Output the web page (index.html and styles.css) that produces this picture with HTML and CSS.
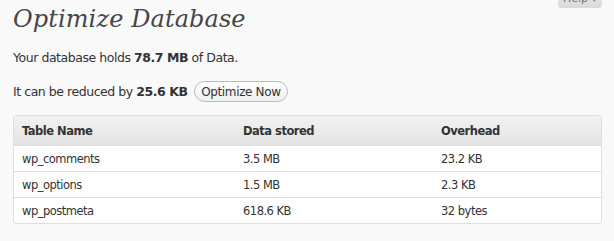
FILE: index.html
```html
<!DOCTYPE html>
<html lang="en">
<head>
    <meta charset="UTF-8">
    <title>Optimize Database</title>
    <link rel="stylesheet" href="styles.css">
</head>
<body>
    <div class="wrap">
        <div class="help-tab">Help &#9662;</div>
        <h2 class="title">Optimize Database</h2>
        <p class="line first">Your database holds <strong>78.7 MB</strong> of Data.</p>
        <p class="line second">It can be reduced by <strong>25.6 KB</strong> <button class="btn">Optimize Now</button></p>
        <table class="dbtable">
            <thead>
                <tr><th class="c1">Table Name</th><th class="c2">Data stored</th><th>Overhead</th></tr>
            </thead>
            <tbody>
                <tr><td>wp_comments</td><td>3.5 MB</td><td>23.2 KB</td></tr>
                <tr><td>wp_options</td><td>1.5 MB</td><td>2.3 KB</td></tr>
                <tr><td>wp_postmeta</td><td>618.6 KB</td><td>32 bytes</td></tr>
            </tbody>
        </table>
    </div>
</body>
</html>
```

FILE: styles.css
```css
*{
    margin: 0;
    padding: 0;
}
body{
    background: #f9f9f9;
    color: #333;
    font-family: "DejaVu Sans", sans-serif;
    font-size: 12px;
}
.wrap{
    position: relative;
    padding: 0 12px 0 13px;
}
/* tab is pushed up so only its lower part shows, as in the screen */
.help-tab{
    position: absolute;
    right: 12px;
    top: -7px;
    width: 44px;
    height: 15px;
    line-height: 12px;
    font-size: 11px;
    color: #777;
    text-align: center;
    background: linear-gradient(#e6e6e6, #dadada);
    border-radius: 0 0 3px 3px;
}
.title{
    font-family: "DejaVu Serif", "Liberation Serif", serif;
    font-style: italic;
    font-weight: normal;
    font-size: 24px;
    letter-spacing: 0.1px;
    color: #464646;
    padding-top: 4px;
    height: 40px;
    line-height: 30px;
}
.line{
    font-size: 12.5px;
    letter-spacing: -0.45px;
    line-height: 21px;
    height: 21px;
}
.first{
    margin-top: 3px;
}
.second{
    margin-top: 13px;
}
.btn{
    font-family: inherit;
    font-size: 12px;
    letter-spacing: -0.35px;
    color: #333;
    background: linear-gradient(#fefefe, #efefef);
    border: 1px solid #bbb;
    border-radius: 11px;
    height: 21px;
    padding: 0 6px;
    margin-left: 3px;
    vertical-align: top;
}
.dbtable{
    margin-top: 13px;
    width: 589px;
    border-collapse: separate;
    border-spacing: 0;
    border: 1px solid #dfdfdf;
    border-radius: 3px;
    background: #fff;
    overflow: hidden;
    font-size: 11.5px;
    letter-spacing: -0.5px;
}
.dbtable th{
    text-align: left;
    font-weight: bold;
    height: 29px;
    padding: 0 8px;
    background: linear-gradient(#f2f2f2, #e3e3e3);
    color: #333;
    border-bottom: 1px solid #dfdfdf;
}
.dbtable td{
    height: 25px;
    padding: 0 8px;
    border-top: 1px solid #dfdfdf;
}
.dbtable tbody tr:first-child td{
    border-top: none;
}
.c1{
    width: 205px;
}
.c2{
    width: 182px;
}
```
